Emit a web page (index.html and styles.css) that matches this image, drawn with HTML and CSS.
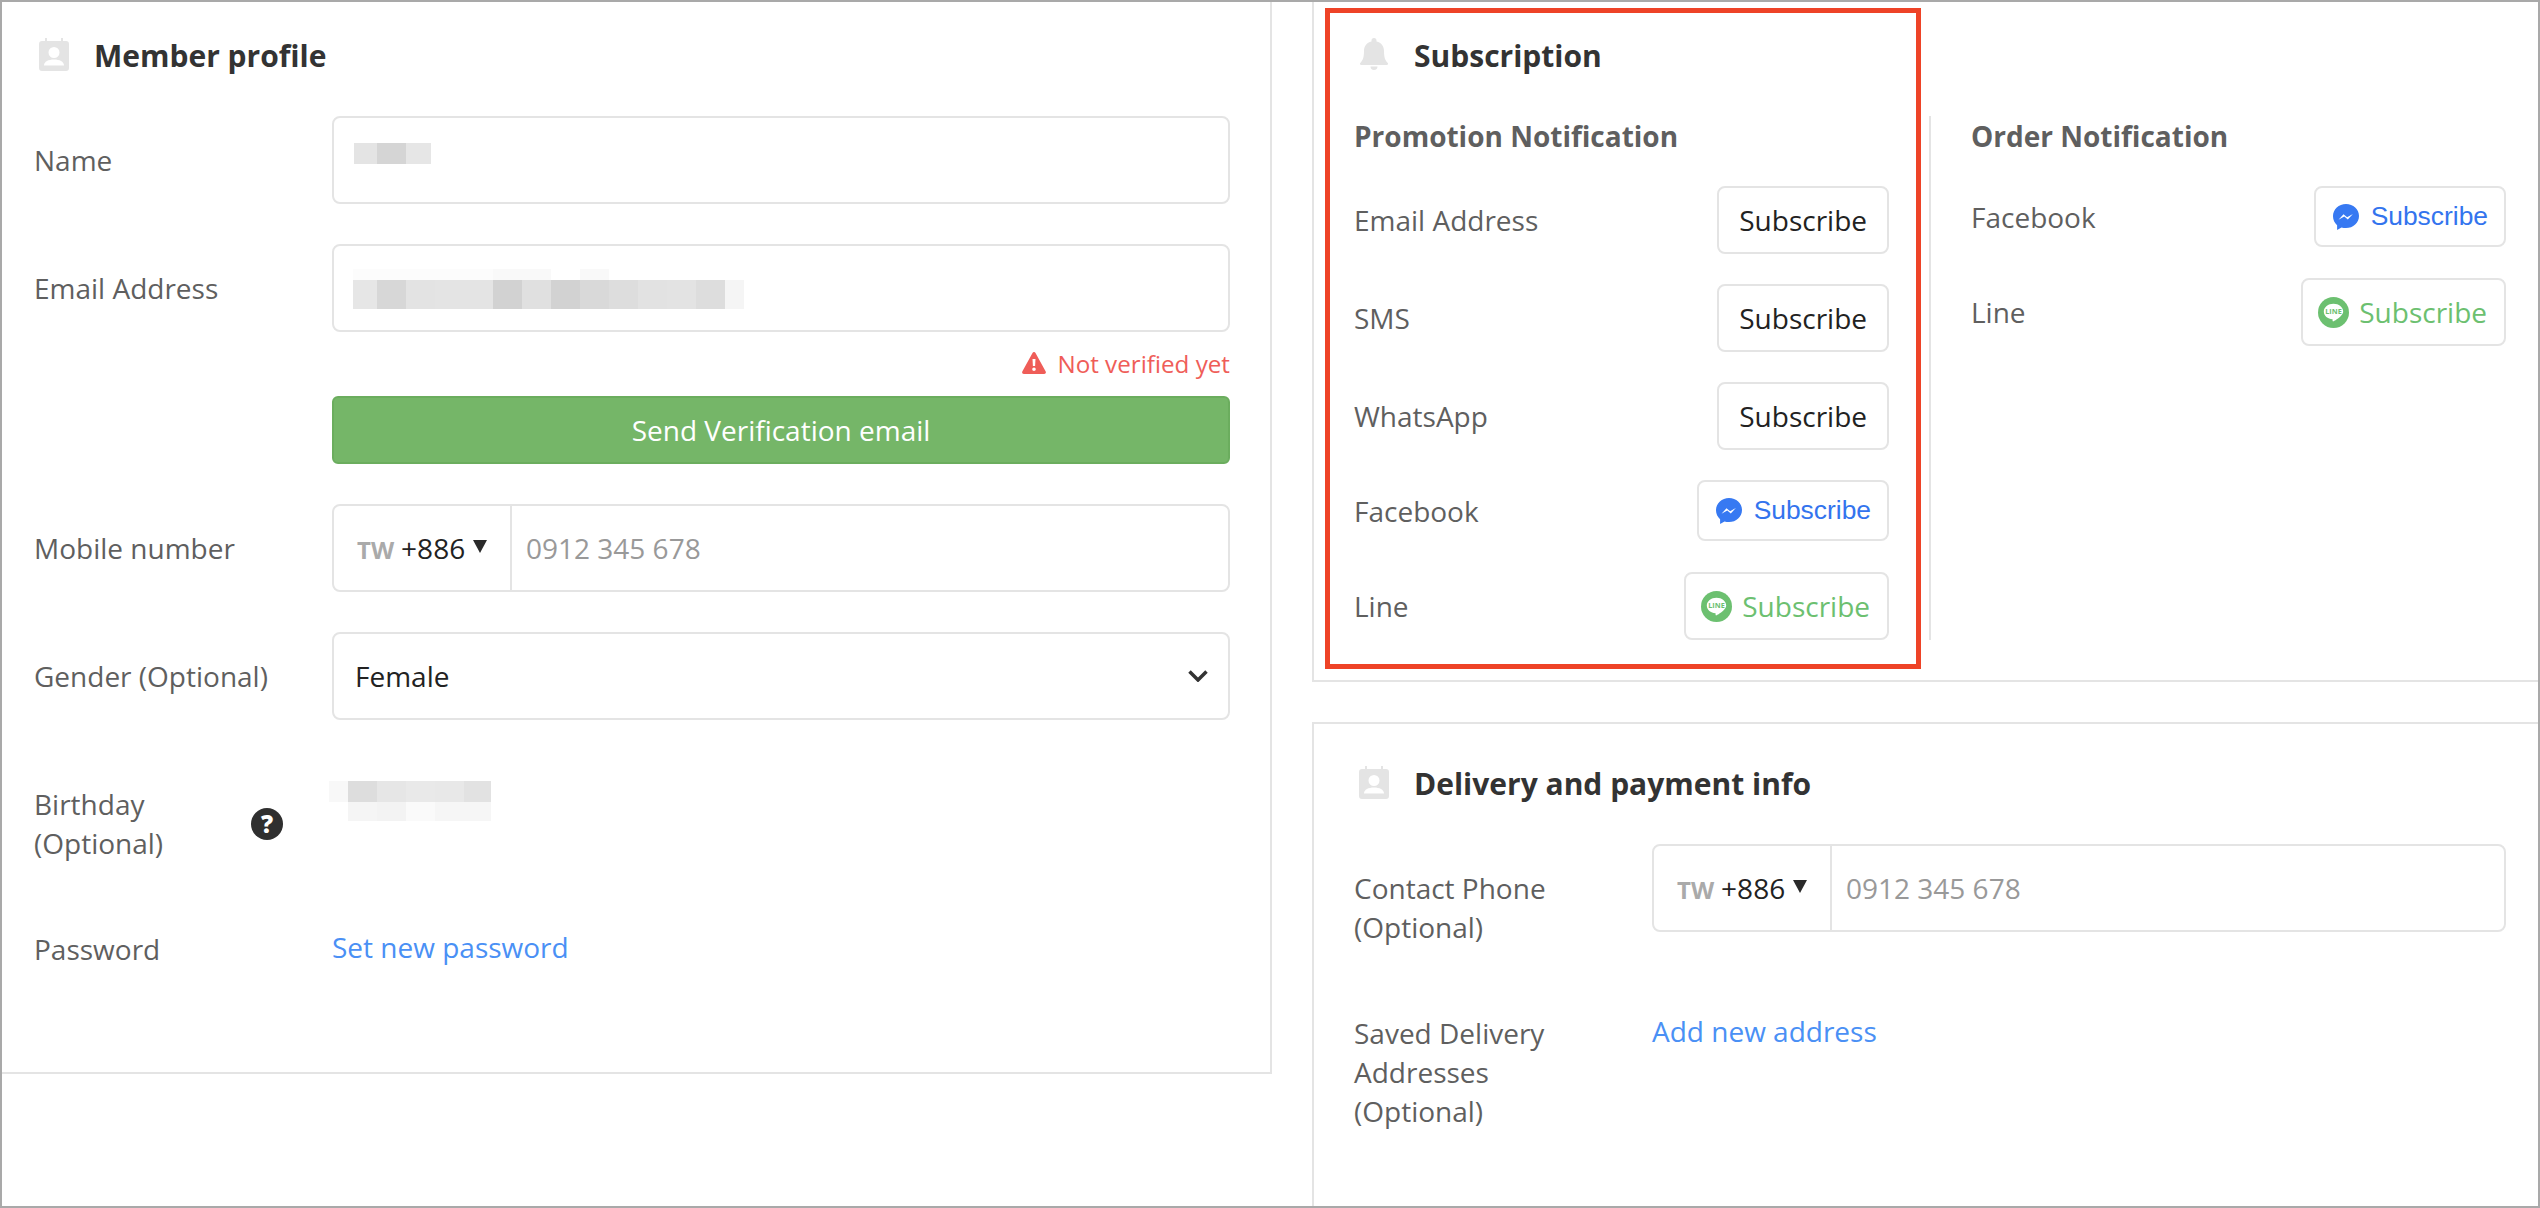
FILE: index.html
```html
<!DOCTYPE html>
<html lang="en">
<head>
<meta charset="utf-8">
<title>Member profile</title>
<link rel="stylesheet" href="styles.css">
</head>
<body>
<div class="frame">
  <section class="card card-profile">
    <h2 class="card-title">
      <svg class="title-icon" viewBox="0 0 30 33"><path class="ic-fill" fill-rule="evenodd" d="M6 0h2v3h14V0h2v3h3a3 3 0 0 1 3 3v24a3 3 0 0 1-3 3H3a3 3 0 0 1-3-3V6a3 3 0 0 1 3-3h3zM15 9a5.5 5.5 0 1 0 0 11 5.500 5.500 0 0 0 0-11zM5 27.500h20c0-4-4.500-6-10-6s-10 2-10 6z"/></svg>
      <span class="title-text">Member profile</span>
    </h2>
    <div class="row">
      <div class="label">Name</div>
      <div class="field">
        <div class="input input-blur"><div class="blur blur-name"></div></div>
      </div>
    </div>
    <div class="row">
      <div class="label">Email Address</div>
      <div class="field">
        <div class="input input-blur-email"><div class="blur blur-email"></div></div>
        <div class="status">
          <svg class="warn-icon" viewBox="0 0 24 22"><path class="warn-fill" fill-rule="evenodd" d="M12 0c.7 0 1.200.4 1.500 1l10.200 18.500c.6 1.200-.2 2.500-1.500 2.500H1.800C.5 22-.3 20.700.3 19.500L10.500 1c.3-.6.800-1 1.500-1zM10.500 7l.4 7h2.200l.4-7zM12 15.500a1.800 1.800 0 1 0 0 3.600 1.800 1.800 0 0 0 0-3.600z"/></svg>
          <span>Not verified yet</span>
        </div>
        <button class="btn-verify" type="button">Send Verification email</button>
      </div>
    </div>
    <div class="row">
      <div class="label">Mobile number</div>
      <div class="field">
        <div class="input phone">
          <div class="dial"><span class="cc">TW</span><span class="code">+886</span><i class="caret"></i></div>
          <div class="ph">0912 345 678</div>
        </div>
      </div>
    </div>
    <div class="row">
      <div class="label">Gender (Optional)</div>
      <div class="field">
        <div class="input select">
          <span>Female</span>
          <svg class="chevron" viewBox="0 0 20 12"><path d="M1.500 1.500 10 10l8.500-8.500"/></svg>
        </div>
      </div>
    </div>
    <div class="row">
      <div class="label label-help">
        <span>Birthday<br>(Optional)</span>
        <span class="help">?</span>
      </div>
      <div class="field"><div class="blur blur-birthday"></div></div>
    </div>
    <div class="row">
      <div class="label">Password</div>
      <div class="field"><a class="link" href="#">Set new password</a></div>
    </div>
  </section>

  <div class="right">
    <section class="card card-sub">
      <h2 class="card-title">
        <svg class="title-icon bell" viewBox="0 0 28 32"><path class="ic-fill" d="M14 0a2.500 2.500 0 0 1 2.500 2.500v1C21.500 4.500 24 8.500 24 13c0 7 1.500 9.500 3.300 11.500.6.700.9 1.200.7 1.800-.2.500-.7.700-1.300.7H1.300c-.6 0-1.100-.2-1.300-.7-.2-.6.100-1.100.7-1.800C2.500 22.500 4 20 4 13c0-4.500 2.500-8.500 7.500-9.500v-1A2.500 2.500 0 0 1 14 0zM10.500 28.500h7a3.500 3.500 0 0 1-7 0z"/></svg>
        <span class="title-text">Subscription</span>
      </h2>
      <div class="sub-cols">
        <div class="sub-col sub-col-promo">
          <h3 class="sub-head">Promotion Notification</h3>
          <div class="sub-row"><span class="sub-label">Email Address</span><button class="btn-sub" type="button">Subscribe</button></div>
          <div class="sub-row"><span class="sub-label">SMS</span><button class="btn-sub" type="button">Subscribe</button></div>
          <div class="sub-row"><span class="sub-label">WhatsApp</span><button class="btn-sub" type="button">Subscribe</button></div>
          <div class="sub-row"><span class="sub-label">Facebook</span>
            <button class="btn-sub btn-fb" type="button">
              <svg class="fb-icon" viewBox="0 0 26 26"><path class="fb-fill" d="M13 0C5.800 0 0 5.400 0 12.300c0 3.600 1.500 6.700 4.100 8.900V26l4.400-2.500c1.400.4 2.900.6 4.500.6 7.200 0 13-5.400 13-12.100S20.200 0 13 0z"/><path class="fb-bolt" d="m5.500 15.800 5-5.500 3.600 2.900 5.800-3.300-5.100 5.600-3.500-2.900z"/></svg>
              <span>Subscribe</span>
            </button>
          </div>
          <div class="sub-row"><span class="sub-label">Line</span>
            <button class="btn-sub btn-line" type="button">
              <svg class="line-icon" viewBox="0 0 32 32"><circle class="line-fill" cx="16" cy="16" r="16"/><path class="line-bubble" d="M16 7c-5.500 0-10 3.500-10 8s4 7.700 9 8c.2.700-.3 2 .5 2.200 1-.1 6.500-3.700 8.500-6.200 1.300-1.300 2-2.500 2-4 0-4.500-4.500-8-10-8z"/><text class="line-text" x="16" y="17.800">LINE</text></svg>
              <span>Subscribe</span>
            </button>
          </div>
        </div>
        <div class="sub-col sub-col-order">
          <h3 class="sub-head">Order Notification</h3>
          <div class="sub-row"><span class="sub-label">Facebook</span>
            <button class="btn-sub btn-fb" type="button">
              <svg class="fb-icon" viewBox="0 0 26 26"><path class="fb-fill" d="M13 0C5.800 0 0 5.400 0 12.300c0 3.600 1.500 6.700 4.100 8.900V26l4.400-2.500c1.400.4 2.900.6 4.500.6 7.200 0 13-5.400 13-12.100S20.200 0 13 0z"/><path class="fb-bolt" d="m5.500 15.800 5-5.500 3.600 2.900 5.800-3.300-5.100 5.600-3.500-2.900z"/></svg>
              <span>Subscribe</span>
            </button>
          </div>
          <div class="sub-row"><span class="sub-label">Line</span>
            <button class="btn-sub btn-line" type="button">
              <svg class="line-icon" viewBox="0 0 32 32"><circle class="line-fill" cx="16" cy="16" r="16"/><path class="line-bubble" d="M16 7c-5.500 0-10 3.500-10 8s4 7.700 9 8c.2.700-.3 2 .5 2.200 1-.1 6.500-3.700 8.500-6.200 1.300-1.300 2-2.500 2-4 0-4.500-4.500-8-10-8z"/><text class="line-text" x="16" y="17.800">LINE</text></svg>
              <span>Subscribe</span>
            </button>
          </div>
        </div>
      </div>
    </section>

    <section class="card card-delivery">
      <h2 class="card-title">
        <svg class="title-icon" viewBox="0 0 30 33"><path class="ic-fill" fill-rule="evenodd" d="M6 0h2v3h14V0h2v3h3a3 3 0 0 1 3 3v24a3 3 0 0 1-3 3H3a3 3 0 0 1-3-3V6a3 3 0 0 1 3-3h3zM15 9a5.500 5.500 0 1 0 0 11 5.500 5.500 0 0 0 0-11zM5 27.500h20c0-4-4.500-6-10-6s-10 2-10 6z"/></svg>
        <span class="title-text">Delivery and payment info</span>
      </h2>
      <div class="row">
        <div class="label">Contact Phone<br>(Optional)</div>
        <div class="field">
          <div class="input phone">
            <div class="dial"><span class="cc">TW</span><span class="code">+886</span><i class="caret"></i></div>
            <div class="ph">0912 345 678</div>
          </div>
        </div>
      </div>
      <div class="row">
        <div class="label">Saved Delivery<br>Addresses<br>(Optional)</div>
        <div class="field"><a class="link" href="#">Add new address</a></div>
      </div>
    </section>
  </div>
  <div class="highlight"></div>
</div>
</body>
</html>
```
FILE: styles.css
```css
* { box-sizing: border-box; }
html, body { margin: 0; padding: 0; }
body {
  background: #fff;
  color: #5f5f5f;
  font-family: "Open Sans", "Noto Sans", sans-serif;
  font-size: 28px;
  line-height: 39px;
}
.frame {
  position: relative;
  display: grid;
  grid-template-columns: 1270px 1fr;
  column-gap: 40px;
  align-items: start;
  height: 1208px;
  border: 2px solid #a9a9a9;
  overflow: hidden;
}
.card { background: #fff; }
.card-profile {
  height: 1072px;
  padding: 33px 40px 0 32px;
  border-right: 2px solid #e4e4e4;
  border-bottom: 2px solid #e4e4e4;
}
.card-title {
  display: flex;
  align-items: center;
  gap: 25px;
  height: 40px;
  margin: 0 0 41px;
  padding-left: 5px;
  color: #333;
  font-size: 30px;
  font-weight: 700;
  line-height: 40px;
}
.title-text { margin-top: 2px; }
.title-icon { width: 30px; height: 33px; flex: none; margin-top: -2px; }
.title-icon.bell { width: 28px; height: 32px; margin-left: 1px; margin-right: 1px; }
.ic-fill { fill: #e4e4e4; }

.row {
  display: grid;
  grid-template-columns: 298px 1fr;
  margin-bottom: 40px;
}
.label { padding: 25px 0 2px; }
.label-help { display: flex; align-items: center; justify-content: space-between; padding-right: 49px; }
.help {
  display: flex;
  align-items: center;
  justify-content: center;
  width: 32px;
  height: 32px;
  border-radius: 50%;
  background: #2f2f2f;
  color: #fff;
  font-size: 24px;
  font-weight: 800;
  line-height: 32px;
}
.field { display: flex; flex-direction: column; min-width: 0; }
.input {
  height: 88px;
  border: 2px solid #e4e4e4;
  border-radius: 8px;
  background: #fff;
  color: #222;
}
.input-blur { padding: 25px 0 0 20px; }
.input-blur-email { padding: 23px 0 0 19px; }

.blur-name {
  width: 77px;
  height: 21px;
  background: linear-gradient(90deg, #e4e4e4 0 23px, #d5d5d5 23px 52px, #e6e6e6 52px);
}
.blur-email {
  width: 391px;
  height: 40px;
  background:
    linear-gradient(90deg, #fcfcfc 0 140px, #f9f9f9 140px 198px, #fff 198px 227px, #f9f9f9 227px 256px, #fff 256px) top / 100% 11px no-repeat,
    linear-gradient(90deg, #e6e6e6 0 24px, #d7d7d7 24px 53px, #e3e3e3 53px 82px, #e4e4e4 82px 140px, #d2d2d2 140px 169px, #e0e0e0 169px 198px, #d2d2d2 198px 227px, #d9d9d9 227px 256px, #dddddd 256px 285px, #e2e2e2 285px 314px, #e3e3e3 314px 343px, #dddddd 343px 372px, #f5f5f5 372px) bottom / 100% 29px no-repeat;
}
.blur-birthday {
  width: 162px;
  height: 40px;
  margin: 21px 0 0 -3px;
  background:
    linear-gradient(90deg, #f8f8f8 0 19px, #dddddd 19px 48px, #e6e6e6 48px 77px, #e9e9e9 77px 106px, #e8e8e8 106px 135px, #e2e2e2 135px) top / 100% 21px no-repeat,
    linear-gradient(90deg, #fff 0 19px, #f5f5f5 19px 48px, #f3f3f3 48px 77px, #fafafa 77px 106px, #f6f6f6 106px) bottom / 100% 19px no-repeat;
}

.status {
  display: flex;
  align-items: center;
  justify-content: flex-end;
  gap: 11px;
  height: 64px;
  color: #ef5d58;
  font-size: 24.200px;
  line-height: 40px;
}
.warn-icon { width: 24px; height: 22px; flex: none; margin-top: -3px; }
.warn-fill { fill: #ef5d58; }
.btn-verify {
  height: 68px;
  border: 2px solid #6bad5e;
  border-radius: 6px;
  background: #75b668;
  color: #fff;
  font: inherit;
  padding: 0;
}

.phone { display: flex; align-items: center; }
.dial {
  display: flex;
  align-items: center;
  height: 100%;
  width: 178px;
  flex: none;
  padding-left: 23px;
  border-right: 2px solid #e4e4e4;
}
.cc { color: #aaa; font-size: 24px; font-weight: 700; margin-right: 7px; padding-top: 3px; }
.code { color: #222; }
.caret {
  width: 0;
  height: 0;
  margin: -3px 0 0 8px;
  border-left: 7px solid transparent;
  border-right: 7px solid transparent;
  border-top: 13px solid #2a2a2a;
}
.ph { padding-left: 14px; color: #999; }
.select {
  display: flex;
  align-items: center;
  justify-content: space-between;
  padding: 0 20px 0 21px;
}
.chevron { width: 20px; height: 12px; flex: none; fill: none; stroke: #333; stroke-width: 3.500; }
.link { color: #4a90f5; text-decoration: none; padding-top: 23px; }

.card-sub {
  padding: 33px 32px 40px 40px;
  border-left: 2px solid #e4e4e4;
  border-bottom: 2px solid #e4e4e4;
}
.sub-cols { display: grid; grid-template-columns: 577px 1fr; }
.sub-col-promo { padding-right: 40px; border-right: 2px solid #e4e4e4; }
.sub-col-order { padding-left: 40px; }
.sub-head {
  height: 70px;
  margin: 0;
  color: #5f5f5f;
  font-size: 28px;
  font-weight: 700;
  line-height: 41px;
}
.sub-row {
  display: flex;
  align-items: center;
  justify-content: space-between;
  margin-bottom: 30px;
}
.sub-row:last-child { margin-bottom: 0; }
.sub-label { padding-top: 1px; }
.btn-sub {
  display: flex;
  align-items: center;
  height: 68px;
  padding: 0 20px;
  border: 2px solid #e4e4e4;
  border-radius: 8px;
  background: #fff;
  color: #222;
  font: inherit;
}
.btn-fb {
  height: 61px;
  gap: 12px;
  margin-bottom: 1px;
  padding: 0 16px 0 17px;
  color: #3374ee;
  font-family: "Liberation Sans", Arial, sans-serif;
  font-size: 26.400px;
}
.fb-icon { width: 26px; height: 26px; flex: none; }
.fb-fill { fill: #3779f2; }
.fb-bolt { fill: #fff; }
.btn-line { gap: 10px; padding: 0 17px 0 15px; color: #6cc070; }
.line-icon { width: 31px; height: 31px; flex: none; }
.line-fill { fill: #6cc070; }
.line-bubble { fill: #fff; }
.line-text { fill: #6cc070; font-family: "Open Sans", sans-serif; font-size: 7.500px; font-weight: 700; text-anchor: middle; }

.right { display: flex; flex-direction: column; }
.card-delivery {
  height: 500px;
  margin-top: 40px;
  padding: 39px 32px 0 40px;
  border-left: 2px solid #e4e4e4;
  border-top: 2px solid #e4e4e4;
}
.card-delivery .card-title { margin-bottom: 41px; }

.highlight {
  position: absolute;
  left: 1323px;
  top: 6px;
  width: 596px;
  height: 661px;
  border: 5px solid #ee4327;
  pointer-events: none;
}
```
